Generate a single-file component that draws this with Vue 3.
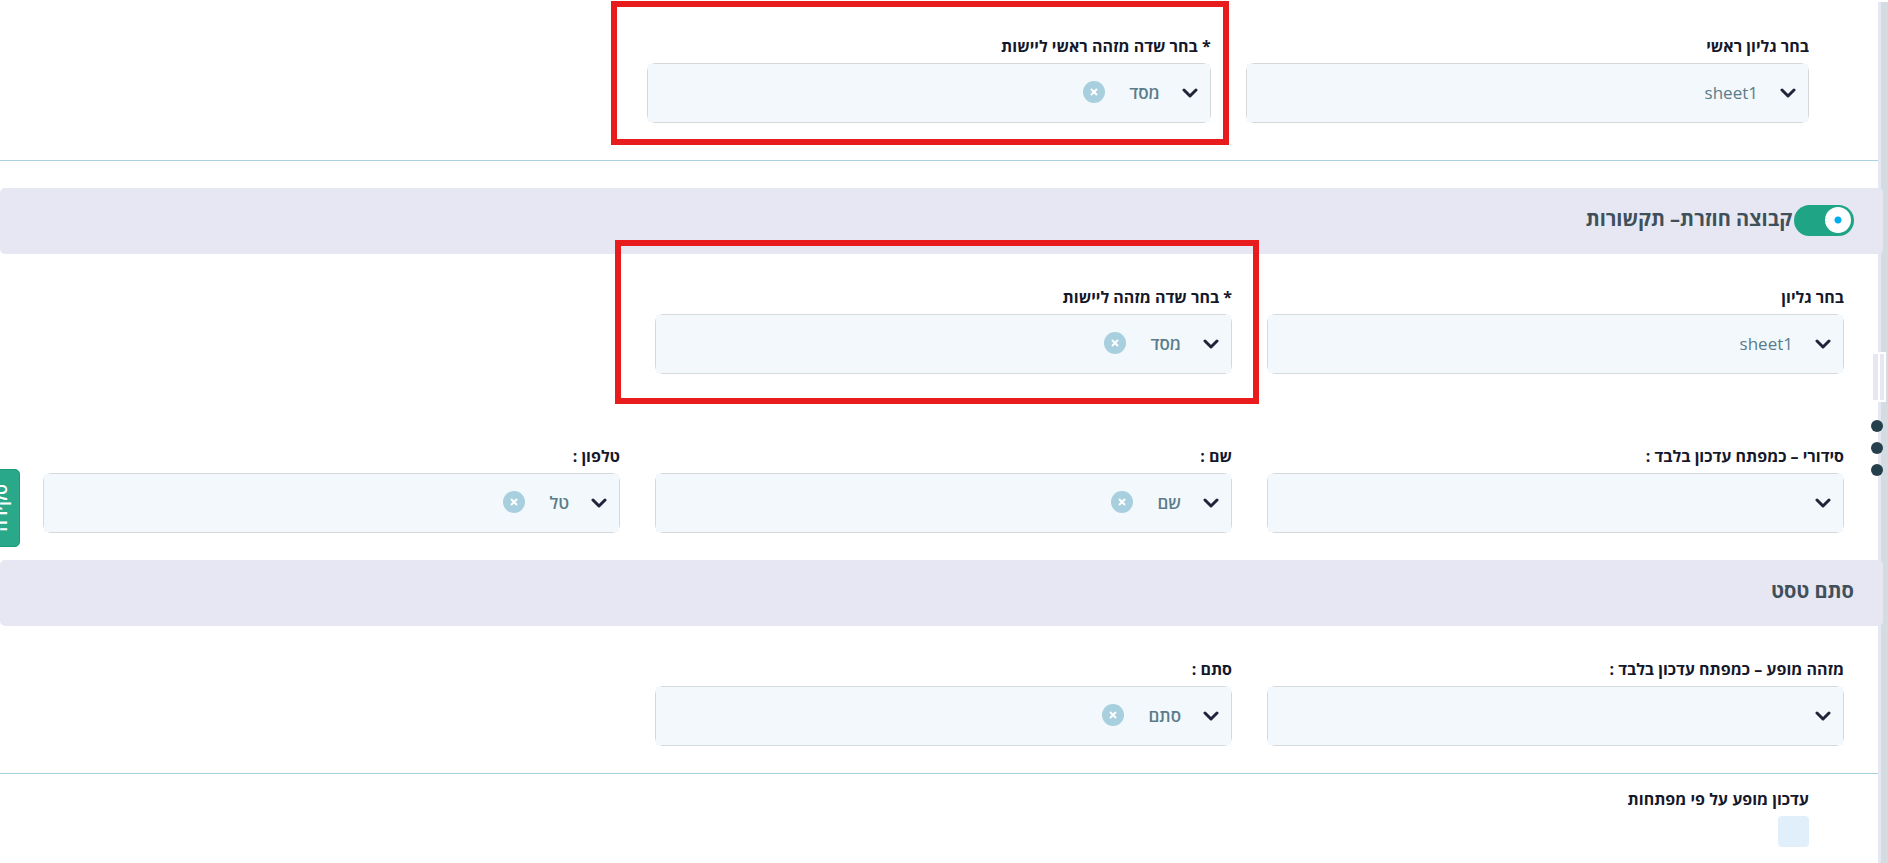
<template>

<div class="page" dir="rtl">
    <form class="panel" @submit.prevent>

        <div class="fields main_fields">
            <div class="field" v-for="item in mainFields" :key="item.id">
                <label :for="item.id">{{ item.label }}</label>
                <div class="control">
                    <div class="inner">
                        <svg class="arrow" viewBox="0 0 16 10"><path d="M2 2 L8 8 L14 2" /></svg>
                        <select :id="item.id" v-model="item.value" :class="{ picked: item.clear }">
                            <option :value="item.value">{{ item.value }}</option>
                        </select>
                        <button v-if="item.clear" type="button" class="clear" aria-label="ניקוי" @click="clearField(item)">
                            <svg viewBox="0 0 8 8"><path d="M1 1 L7 7 M7 1 L1 7" /></svg>
                        </button>
                    </div>
                </div>
                <div v-if="item.mark" class="mark" :class="item.mark"></div>
            </div>
        </div>

        <hr>

        <template v-for="group in groups" :key="group.title">
            <div class="band" :class="{ first: group.toggle }">
                <input v-if="group.toggle" type="checkbox" class="switch" id="group_switch" v-model="group.open">
                <label v-if="group.toggle" for="group_switch">{{ group.title }}</label>
                <span v-else>{{ group.title }}</span>
            </div>
            <div class="fields group_fields">
                <div class="field" :class="{ row_start: item.rowStart }" v-for="item in group.fields" :key="item.id">
                    <label :for="item.id">{{ item.label }}</label>
                    <div class="control">
                        <div class="inner">
                            <svg class="arrow" viewBox="0 0 16 10"><path d="M2 2 L8 8 L14 2" /></svg>
                            <select :id="item.id" v-model="item.value" :class="{ empty: !item.value, picked: item.clear }">
                                <option :value="item.value">{{ item.value }}</option>
                            </select>
                            <button v-if="item.clear" type="button" class="clear" aria-label="ניקוי" @click="clearField(item)">
                                <svg viewBox="0 0 8 8"><path d="M1 1 L7 7 M7 1 L1 7" /></svg>
                            </button>
                        </div>
                    </div>
                    <div v-if="item.mark" class="mark" :class="item.mark"></div>
                </div>
            </div>
        </template>

        <hr>

        <div class="update">
            <label for="update_keys">עדכון מופע על פי מפתחות</label>
            <input type="checkbox" id="update_keys" v-model="updateByKeys">
        </div>
    </form>

    <!-- ידית הגרירה ותפריט הנקודות שעל שולי החלון -->
    <div class="side_tools">
        <div class="handle"><i></i><i></i></div>
        <button type="button" class="dots" aria-label="תפריט"><i></i><i></i><i></i></button>
    </div>

    <button type="button" class="survey"><span>סקירה</span></button>
</div>

</template>

<script setup>

import {ref} from 'vue';

const mainFields = ref([
    { id: 'main_sheet', label: 'בחר גליון ראשי', value: 'sheet1' },
    { id: 'main_key', label: '* בחר שדה מזהה ראשי ליישות', value: 'מסד', clear: true, mark: 'mark_main' }
]);

const groups = ref([
    {
        title: 'קבוצה חוזרת– תקשורות',
        toggle: true,
        open: true,
        fields: [
            { id: 'sheet', label: 'בחר גליון', value: 'sheet1' },
            { id: 'key', label: '* בחר שדה מזהה ליישות', value: 'מסד', clear: true, mark: 'mark_group' },
            { id: 'serial', label: 'סידורי – כמפתח עדכון בלבד :', value: '', rowStart: true },
            { id: 'name', label: 'שם :', value: 'שם', clear: true },
            { id: 'phone', label: 'טלפון :', value: 'טל', clear: true }
        ]
    },
    {
        title: 'סתם טסט',
        fields: [
            { id: 'instance', label: 'מזהה מופע – כמפתח עדכון בלבד :', value: '' },
            { id: 'stam', label: 'סתם :', value: 'סתם', clear: true }
        ]
    }
]);

const updateByKeys = ref(false);

function clearField(item){
    item.value = '';
    item.clear = false;
}

</script>

<style>
body{
    margin: 0;
    background-color: #d2dce1;
}
</style>

<style scoped>

.page{
    position: relative;
    box-sizing: border-box;
    min-height: 100vh;
    display: flex;
    overflow: hidden;
    padding: 2px 7px 0 0;
    background: linear-gradient(white 2px, #d2dce1 2px);
    font-family: "Open Sans", "Liberation Sans", sans-serif;
    color: #15182b;
}
.panel{
    flex: 1;
    min-width: 0;
    border-right: 3px solid #e7e7f3;
    background-color: white;
}
hr{
    margin: 0;
    border: 0;
    border-top: 1px solid #a9d0de;
}

.fields{
    display: grid;
    grid-template-columns: repeat(3, minmax(0, 1fr));
    column-gap: 35px;
    row-gap: 70px;
}
.main_fields{
    padding: 32px 69px 37px 49px;
}
.group_fields{
    padding: 31px 34px 27px 43px;
}
.field{
    position: relative;
}
.row_start{
    grid-column-start: 1;
}
.field > label, .update label{
    display: block;
    margin-bottom: 5px;
    font-size: 16px;
    line-height: 24px;
    font-weight: 700;
}
.control{
    box-sizing: border-box;
    height: 60px;
    border: 1px solid #d6d9da;
    border-radius: 8px;
}
.inner{
    height: 100%;
    display: flex;
    align-items: center;
    padding: 0 12px;
    box-sizing: border-box;
    background-color: #f2f8fb;
}
.arrow{
    width: 16px;
    height: 10px;
    margin-left: 22px;
    fill: none;
    stroke: #20243a;
    stroke-width: 3;
    stroke-linecap: round;
    stroke-linejoin: round;
}
select{
    appearance: none;
    padding: 0;
    border: 0;
    outline: none;
    background: none;
    color: #5a7c8a;
    font-family: inherit;
    font-size: 17px;
    line-height: 24px;
    font-weight: 500;
}
select.picked{
    font-weight: 600;
}
select.empty{
    flex: 1;
}
.clear{
    display: flex;
    align-items: center;
    justify-content: center;
    width: 22px;
    height: 22px;
    margin: 0 24px 3px 0;
    padding: 0;
    border: 0;
    border-radius: 50%;
    background-color: #a8cfde;
}
.clear svg{
    width: 8px;
    height: 8px;
    stroke: white;
    stroke-width: 2;
}

/* מסגרות הסימון האדומות מעל השדות */
.mark{
    position: absolute;
    z-index: 2;
    border: 6px solid #e81c1c;
    pointer-events: none;
}
.mark_main{
    inset: -33px -18px -22px -36px;
}
.mark_group{
    inset: -45px -27px -30px -40px;
}

.band{
    display: flex;
    align-items: center;
    height: 66px;
    margin-right: -5px;
    padding: 0 29px 2px;
    box-sizing: border-box;
    position: relative;
    border-radius: 5px;
    background-color: #e7e7f3;
    color: #40505a;
    font-size: 20px;
    line-height: 24px;
    font-weight: 700;
}
.band.first{
    margin-top: 27px;
}
.band label, .band span{
    padding-bottom: 2px;
}
.switch{
    appearance: none;
    display: flex;
    align-items: center;
    width: 60px;
    height: 31px;
    margin: 0 0 0 2px;
    padding: 0 3px;
    box-sizing: border-box;
    border-radius: 16px;
    background-color: #9aa5ab;
}
.switch:checked{
    background-color: #1fa585;
}
.switch::before{
    content: '';
    width: 26px;
    height: 26px;
    border-radius: 50%;
    background: radial-gradient(circle, #00aeef 3px, white 4px);
}

.update{
    padding: 13px 69px 16px 49px;
}
.update input{
    appearance: none;
    display: block;
    width: 31px;
    height: 31px;
    margin: 0;
    border-radius: 4px;
    background-color: #e1effa;
}
.update input:checked{
    background-color: #1fa585;
}

.side_tools{
    position: absolute;
    top: 352px;
    right: 2px;
    display: flex;
    flex-direction: column;
    gap: 18px;
}
.handle{
    display: flex;
    gap: 2px;
    width: 15px;
    height: 50px;
    padding: 2px;
    box-sizing: border-box;
    background-color: white;
}
.handle i{
    flex: 1;
    background-color: #e7e7f3;
}
.dots{
    display: flex;
    flex-direction: column;
    gap: 10px;
    margin: 0 3px 0 0;
    padding: 0;
    border: 0;
    background: none;
}
.dots i{
    width: 12px;
    height: 12px;
    border-radius: 50%;
    background-color: #263f4c;
}

.survey{
    position: absolute;
    top: 469px;
    left: -20px;
    width: 40px;
    height: 78px;
    padding: 0;
    border: 1px solid #1a9a78;
    border-radius: 5px;
    background-color: #29a98a;
    color: white;
    font-family: inherit;
    font-size: 18px;
    font-weight: 600;
    display: flex;
    align-items: center;
    justify-content: center;
}
.survey span{
    writing-mode: sideways-lr;
}

</style>
